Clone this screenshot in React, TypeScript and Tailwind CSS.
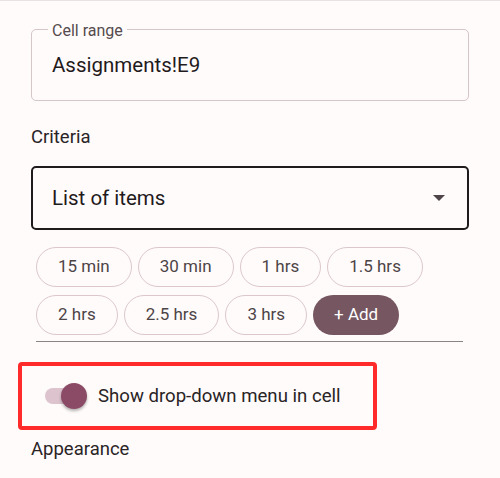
import React from "react";

const chips = ["15 min", "30 min", "1 hrs", "1.5 hrs", "2 hrs", "2.5 hrs", "3 hrs"];

export default function App() {
  return (
    <div
      className="w-[500px] h-[478px] overflow-hidden bg-[#fffbfa] border-t border-[#ebe3e3] text-[#1f1a1c]"
      style={{ fontFamily: "Roboto, 'Noto Sans', sans-serif" }}
    >
      <div className="flex flex-col px-[31px]">
        <div className="mt-[28px] h-[72px] relative border border-[#d5c6c8] rounded-[5px] flex items-center pl-[20px]">
          <span className="absolute top-[-9px] left-[16px] px-[4px] bg-[#fffbfa] text-[16px] leading-[20px] text-[#554b4e]">
            Cell range
          </span>
          <span className="text-[20.5px] leading-[28px]">Assignments!E9</span>
        </div>

        <div className="mt-[24px] h-[24px] leading-[24px] text-[18.5px] text-[#2a2426]">Criteria</div>

        <div className="mt-[17px] h-[64px] border-2 border-[#1f1b1c] rounded-[5px] flex items-center justify-between pl-[19px] pr-[22px]">
          <span className="text-[20.5px] leading-[28px]">List of items</span>
          <svg width="12" height="6" viewBox="0 0 12 6">
            <path d="M0 0 L12 0 L6 6 Z" fill="#4f4448" />
          </svg>
        </div>

        <div className="mt-[17px] pl-[5px] flex flex-wrap gap-x-[6px] gap-y-[8px] w-[420px]">
          {chips.map((c) => (
            <div
              key={c}
              className="h-[40px] px-[21px] rounded-full border border-[#dcc8cb] flex items-center text-[17px] text-[#4d4447]"
            >
              {c}
            </div>
          ))}
          <div className="h-[40px] px-[21px] rounded-full bg-[#755661] flex items-center text-[17px] text-white">
            + Add
          </div>
        </div>

        <div className="mt-[6px] ml-[5px] w-[427px] h-px bg-[#8c8386]" />

        <div className="mt-[20px] -ml-[13px] w-[359px] h-[68px] border-4 border-[#ff2b2b] rounded-[4px] flex items-center pl-[23px]">
          <div className="relative w-[42px] h-[26px] shrink-0">
            <div className="absolute left-0 top-[5px] w-[36px] h-[16px] rounded-full bg-[#dcc3cd]" />
            <div className="absolute right-0 top-0 w-[26px] h-[26px] rounded-full bg-[#8b4a66] shadow-[0_2px_3px_rgba(0,0,0,0.3)]" />
          </div>
          <span className="ml-[11px] text-[18.6px] leading-[24px] text-[#2a2426]">Show drop-down menu in cell</span>
        </div>

        <div className="mt-[7px] h-[24px] leading-[24px] text-[18.5px] text-[#2a2426]">Appearance</div>
      </div>
    </div>
  );
}
